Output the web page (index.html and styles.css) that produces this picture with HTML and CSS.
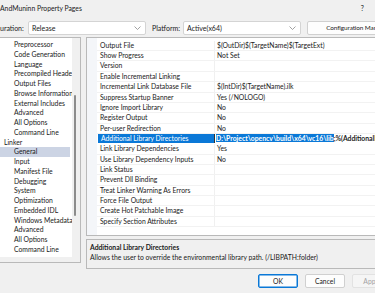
FILE: index.html
```html
<!DOCTYPE html>
<html lang="en">
<head>
    <meta charset="UTF-8">
    <title>AndMuninn Property Pages</title>
    <link rel="stylesheet" href="styles.css">
</head>
<body>
    <div class="dialog">
        <div class="titlebar">
            <span class="title">AndMuninn Property Pages</span>
            <span class="help">?</span>
        </div>

        <div class="configbar">
            <span class="cfg-label">uration:</span>
            <div class="combo combo-config">
                <span>Release</span>
                <svg class="chev" width="7" height="4" viewBox="0 0 7 4"><polyline points="0.5,0.5 3.5,3.5 6.5,0.5" fill="none" stroke="#8a8a8a" stroke-width="0.8"/></svg>
            </div>
            <span class="cfg-label platform">Platform:</span>
            <div class="combo combo-platform">
                <span>Active(x64)</span>
                <svg class="chev" width="7" height="4" viewBox="0 0 7 4"><polyline points="0.5,0.5 3.5,3.5 6.5,0.5" fill="none" stroke="#8a8a8a" stroke-width="0.8"/></svg>
            </div>
            <div class="btn cfg-manager">Configuration Manager...</div>
        </div>

        <div class="main">
            <div class="tree-box">
                <ul class="tree">
                    <li class="child">Preprocessor</li>
                    <li class="child">Code Generation</li>
                    <li class="child">Language</li>
                    <li class="child">Precompiled Headers</li>
                    <li class="child">Output Files</li>
                    <li class="child">Browse Information</li>
                    <li class="child">External Includes</li>
                    <li class="child">Advanced</li>
                    <li class="child">All Options</li>
                    <li class="child">Command Line</li>
                    <li class="parent">Linker</li>
                    <li class="child selected">General</li>
                    <li class="child">Input</li>
                    <li class="child">Manifest File</li>
                    <li class="child">Debugging</li>
                    <li class="child">System</li>
                    <li class="child">Optimization</li>
                    <li class="child">Embedded IDL</li>
                    <li class="child">Windows Metadata</li>
                    <li class="child">Advanced</li>
                    <li class="child">All Options</li>
                    <li class="child">Command Line</li>
                </ul>
                <div class="tree-scroll"><div class="thumb"></div></div>
            </div>

            <div class="right">
                <div class="grid">
                    <div class="row"><span class="name">Output File</span><span class="value">$(OutDir)$(TargetName)$(TargetExt)</span></div>
                    <div class="row"><span class="name">Show Progress</span><span class="value">Not Set</span></div>
                    <div class="row"><span class="name">Version</span><span class="value"></span></div>
                    <div class="row"><span class="name">Enable Incremental Linking</span><span class="value"></span></div>
                    <div class="row"><span class="name">Incremental Link Database File</span><span class="value">$(IntDir)$(TargetName).ilk</span></div>
                    <div class="row"><span class="name">Suppress Startup Banner</span><span class="value">Yes (/NOLOGO)</span></div>
                    <div class="row"><span class="name">Ignore Import Library</span><span class="value">No</span></div>
                    <div class="row"><span class="name">Register Output</span><span class="value">No</span></div>
                    <div class="row"><span class="name">Per-user Redirection</span><span class="value">No</span></div>
                    <div class="row active"><span class="name">Additional Library Directories</span><span class="value edit"><span class="sel">D:\Project\opencv\build\x64\vc16\lib</span>;%(AdditionalLibraryDirectories)</span></div>
                    <div class="row"><span class="name">Link Library Dependencies</span><span class="value">Yes</span></div>
                    <div class="row"><span class="name">Use Library Dependency Inputs</span><span class="value">No</span></div>
                    <div class="row"><span class="name">Link Status</span><span class="value"></span></div>
                    <div class="row"><span class="name">Prevent Dll Binding</span><span class="value"></span></div>
                    <div class="row"><span class="name">Treat Linker Warning As Errors</span><span class="value"></span></div>
                    <div class="row"><span class="name">Force File Output</span><span class="value"></span></div>
                    <div class="row"><span class="name">Create Hot Patchable Image</span><span class="value"></span></div>
                    <div class="row"><span class="name">Specify Section Attributes</span><span class="value"></span></div>
                </div>
                <div class="desc">
                    <div class="desc-title">Additional Library Directories</div>
                    <div class="desc-text">Allows the user to override the environmental library path. (/LIBPATH:folder)</div>
                </div>
            </div>
        </div>

        <div class="buttons">
            <div class="btn btn-ok">OK</div>
            <div class="btn">Cancel</div>
            <div class="btn btn-disabled">Apply</div>
        </div>
    </div>
</body>
</html>
```

FILE: styles.css
```css
* {
    box-sizing: border-box;
}
body {
    margin: 0;
    width: 375px;
    height: 293px;
    overflow: hidden;
    background: #f0f0f0;
    font-family: Lato, "Liberation Sans", sans-serif;
    font-size: 6.8px;
    color: #1a1a1a;
}
.dialog {
    width: 375px;
    height: 293px;
    overflow: hidden;
}
.titlebar {
    height: 17px;
    display: flex;
    align-items: center;
    justify-content: space-between;
    padding: 0 11px 2px 0;
}
.help {
    font-size: 7px;
}
.configbar {
    height: 20px;
    display: flex;
    align-items: center;
    white-space: nowrap;
    padding-top: 1px;
    font-size: 7px;
}
.configbar > * {
    flex-shrink: 0;
}
.cfg-label {
    width: 28px;
}
.cfg-label.platform {
    width: 31px;
    margin-left: 6px;
}
.combo {
    height: 14px;
    background: #fff;
    border: 1px solid #d4d4d4;
    border-radius: 2px;
    display: flex;
    align-items: center;
    justify-content: space-between;
    padding: 0 4px 0 3px;
}
.combo-config {
    width: 118px;
}
.combo-platform {
    width: 118px;
}
.cfg-manager {
    margin-left: 6px;
    width: 100px;
    justify-content: flex-start;
    padding-left: 5px;
    font-size: 6.4px;
    letter-spacing: -0.1px;
}
.btn {
    height: 14px;
    background: #fdfdfd;
    border: 1px solid #d0d0d0;
    border-radius: 2px;
    display: flex;
    align-items: center;
    justify-content: center;
    white-space: nowrap;
}
.main {
    display: flex;
    height: 231px;
}
.tree-box {
    width: 81px;
    height: 226px;
    border-top: 1px solid #b9b9b9;
    border-right: 1px solid #b9b9b9;
    border-bottom: 1px solid #b9b9b9;
    display: flex;
    flex-shrink: 0;
}
.tree {
    list-style: none;
    margin: 0;
    width: 72px;
    height: 219px;
    padding: 2px 0 0 0;
    background: #fff;
}
.tree li {
    height: 9.75px;
    line-height: 9.75px;
    white-space: nowrap;
    overflow: hidden;
}
.tree .parent {
    padding-left: 4px;
}
.tree .child {
    padding-left: 14px;
}
.tree .selected {
    background: #ccd4e4;
    margin-right: 2px;
}
.tree-scroll {
    width: 8px;
    position: relative;
}
.thumb {
    position: absolute;
    left: 2px;
    top: 57px;
    width: 2px;
    height: 121px;
    background: #8c8c8c;
    border-radius: 1px;
}
.right {
    margin-left: 5px;
    width: 300px;
    flex-shrink: 0;
}
.grid {
    height: 199px;
    background: #fff;
    border: 1px solid #b9b9b9;
    padding: 2.8px 0 0 10px;
    background-image: linear-gradient(#f4f6f9, #f4f6f9);
    background-size: 10px 100%;
    background-repeat: no-repeat;
}
.row {
    height: 10.35px;
    display: flex;
    border-bottom: 1px solid #f2f2f2;
    white-space: nowrap;
}
.name {
    width: 117px;
    flex-shrink: 0;
    padding-left: 3px;
    line-height: 9.35px;
}
.value {
    flex: 1;
    border-left: 1px solid #f0f0f0;
    padding-left: 2px;
    line-height: 9.35px;
    overflow: hidden;
}
.row.active {
    border-bottom-color: #fff;
}
.row.active .name {
    background: #0a78d7;
    color: #fff;
    margin-left: 1px;
    width: 116px;
}
.value.edit {
    font-weight: bold;
    border-left: 1px solid #333;
    padding-left: 1px;
}
.sel {
    background: #0a78d7;
    color: #fff;
}
.desc {
    margin-top: 3px;
    height: 30px;
    border: 1px solid #b9b9b9;
    padding: 2px 3px;
}
.desc-title {
    font-weight: bold;
    line-height: 10px;
}
.desc-text {
    line-height: 11px;
}
.buttons {
    display: flex;
    justify-content: flex-end;
    gap: 7px;
    margin-top: 6px;
    margin-right: -17px;
}
.buttons .btn {
    width: 40px;
}
.btn-ok {
    border-color: #0a78d7;
    box-shadow: inset 0 0 0 0.5px #0a78d7;
}
.btn-disabled {
    color: #a3a3a3;
    background: #f5f5f5;
    border-color: #e2e2e2;
}
```
